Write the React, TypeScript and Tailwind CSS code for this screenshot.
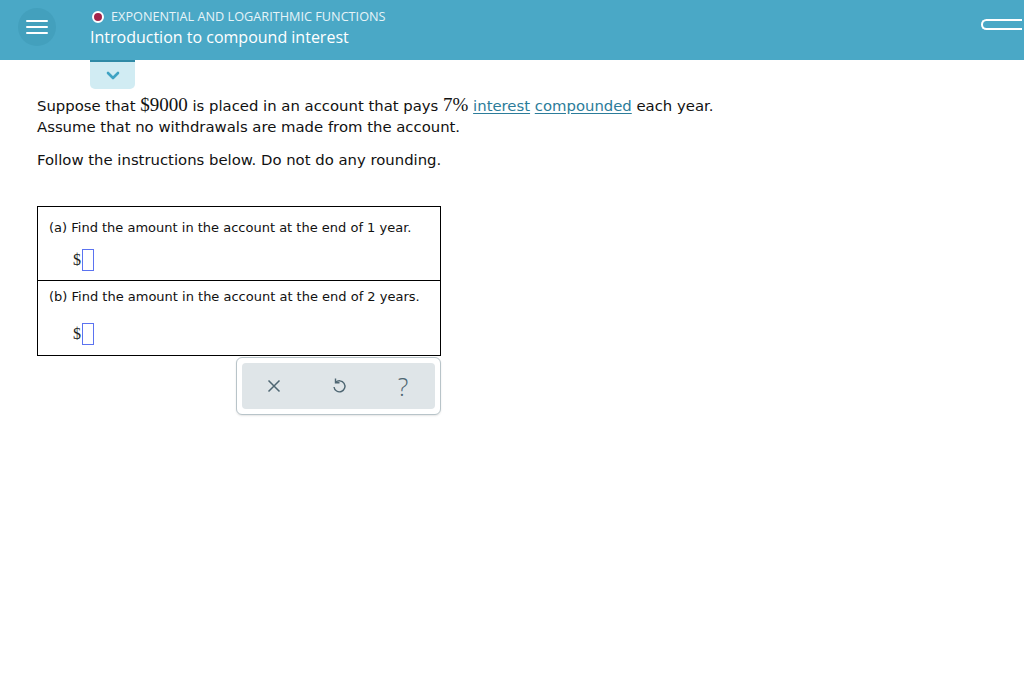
import React from "react";

function AnswerRow({ label, top }: { label: string; top: boolean }) {
  return (
    <div className={top ? "px-[11px] pt-[13px] pb-[9px]" : "px-[11px] pt-[8px] pb-[10px]"}>
      <div className="text-[13px] leading-[16px] text-[#111]">{label}</div>
      <div className={top ? "flex items-center pl-[24px] pt-[13px]" : "flex items-center pl-[24px] pt-[18px]"}>
        <span className="font-[family-name:'Liberation_Serif',serif] text-[16px] leading-[20px] text-[#222]">$</span>
        <span className="inline-block w-[12px] h-[22px] border border-[#5b73f0] ml-[1px]" />
      </div>
    </div>
  );
}

export default function App() {
  return (
    <div className="w-[1024px] h-[699px] bg-white relative overflow-hidden font-[family-name:'DejaVu_Sans',sans-serif]">
      <header className="h-[60px] bg-[#4aa8c6] flex items-start relative">
        <div className="ml-[18px] mt-[8px] w-[38px] h-[38px] rounded-full bg-[#43a0bd] flex flex-col items-center justify-center gap-[4px]">
          <span className="block w-[22px] h-[2px] bg-white rounded" />
          <span className="block w-[22px] h-[2px] bg-white rounded" />
          <span className="block w-[22px] h-[2px] bg-white rounded" />
        </div>
        <div className="ml-[36px] mt-[8px] font-[family-name:'Open_Sans',sans-serif]">
          <div className="flex items-center h-[17px]">
            <span className="inline-block w-[12px] h-[12px] rounded-full bg-[#a3244a] border-[2px] border-white" />
            <span className="ml-[7px] text-[12.7px] text-[#e6f4f8]">EXPONENTIAL AND LOGARITHMIC FUNCTIONS</span>
          </div>
          <div className="ml-[-2px] mt-[2px] text-[16px] leading-[21px] text-white">Introduction to compound interest</div>
        </div>
        <div className="absolute right-[2px] top-[19px] w-[41px] h-[11px] border-[2px] border-white rounded-l-[6px] border-r-0" />
      </header>

      <div className="ml-[90px] w-[45px] h-[29px] bg-[#d1ecf3] border-t-[2px] border-[#2f8aa6] rounded-b-[5px] flex items-center justify-center">
        <svg width="14" height="9" viewBox="0 0 14 9">
          <path d="M2 2 L7 7 L12 2" fill="none" stroke="#3fa3c3" strokeWidth="2.6" strokeLinecap="round" strokeLinejoin="round" />
        </svg>
      </div>

      <div className="ml-[37px] mt-[6px] text-[14.85px] leading-[21px] text-[#111]">
        <p>
          Suppose that <span className="font-[family-name:'Liberation_Serif',serif] text-[19px] leading-[20px]">$9000</span> is placed in an account that pays{" "}
          <span className="font-[family-name:'Liberation_Serif',serif] text-[19px] leading-[20px]">7%</span>{" "}
          <span className="text-[#2c7c9a] underline underline-offset-2">interest</span>{" "}
          <span className="text-[#2c7c9a] underline underline-offset-2">compounded</span> each year.
        </p>
        <p>Assume that no withdrawals are made from the account.</p>
        <p className="mt-[12px]">Follow the instructions below. Do not do any rounding.</p>
      </div>

      <div className="ml-[37px] mt-[35px] w-[404px] border border-black">
        <AnswerRow top label="(a) Find the amount in the account at the end of 1 year." />
        <div className="border-t border-black" />
        <AnswerRow top={false} label="(b) Find the amount in the account at the end of 2 years." />
      </div>

      <div className="ml-[236px] mt-[1px] w-[205px] h-[58px] border border-[#b8c4c9] rounded-[6px] p-[5px] bg-white shadow-[0_1px_2px_rgba(0,0,0,0.1)]">
        <div className="h-full bg-[#dfe5e8] rounded-[4px] flex items-center pl-[12px] gap-[25px]">
          <div className="w-[40px] flex justify-center">
            <svg width="14" height="14" viewBox="0 0 14 14">
              <path d="M1.5 1.5 L12.5 12.5 M12.5 1.5 L1.5 12.5" stroke="#4e6672" strokeWidth="1.5" />
            </svg>
          </div>
          <div className="w-[40px] flex justify-center">
            <svg width="16" height="18" viewBox="0 0 16 18">
              <path d="M4.5 5.5 A5.5 5.5 0 1 1 3 10" fill="none" stroke="#4e6672" strokeWidth="1.4" />
              <path d="M4.5 1.5 L4.5 5.8 L8.5 5.8" fill="none" stroke="#4e6672" strokeWidth="1.4" />
            </svg>
          </div>
          <div className="w-[40px] flex justify-center pr-[2px]">
            <span className="font-[family-name:'Open_Sans',sans-serif] text-[25px] leading-none text-[#4e6672] font-light">?</span>
          </div>
        </div>
      </div>
    </div>
  );
}
